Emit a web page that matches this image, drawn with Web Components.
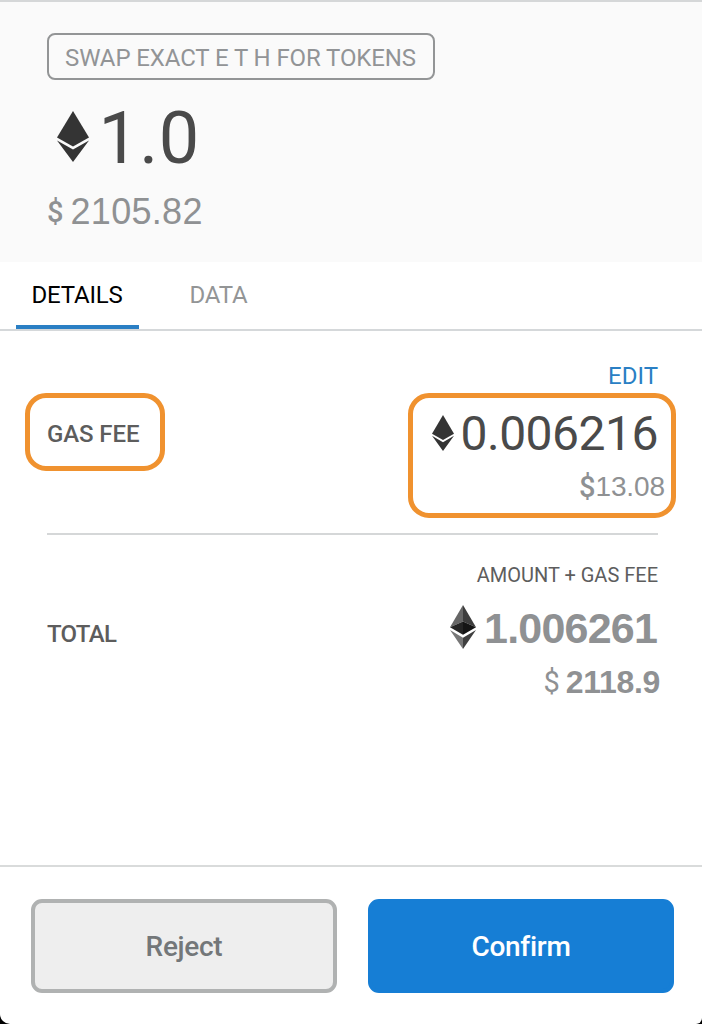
<!DOCTYPE html>
<html lang="en">
<head>
<meta charset="utf-8">
<title>Confirm transaction</title>
<style>
  html, body { margin: 0; height: 100%; background: #000; }
  body { font-family: Roboto, "Liberation Sans", sans-serif; color: #4a4a4a; overflow: hidden; }
</style>
</head>
<body>
<confirm-page>
  <tx-summary slot="summary" action="SWAP EXACT E T H FOR TOKENS">
    <eth-icon slot="icon"></eth-icon>
    <span slot="amount">1.0</span>
    <fiat-value slot="fiat" style="--digits: 36px; --gap: 7px; --track: 0.3px">2105.82</fiat-value>
  </tx-summary>

  <tab-bar slot="tabs">
    <tab-item active>DETAILS</tab-item>
    <tab-item>DATA</tab-item>
  </tab-bar>

  <fee-row slot="details" label="GAS FEE" highlighted>
    <span slot="note">EDIT</span>
    <eth-icon slot="icon"></eth-icon>
    <span slot="amount">0.006216</span>
    <fiat-value slot="fiat" style="--digits: 28px; --gap: 0px; --sign-weight: 500; --track: -0.1px">13.08</fiat-value>
  </fee-row>
  <fee-row slot="details" label="TOTAL" total>
    <span slot="note">AMOUNT + GAS FEE</span>
    <eth-icon slot="icon" faceted></eth-icon>
    <span slot="amount">1.006261</span>
    <fiat-value slot="fiat" style="--digits: 32px; --gap: 6px; --weight: 700; --sign-weight: 400; --track: -0.3px">2118.9</fiat-value>
  </fee-row>

  <action-button slot="actions" kind="secondary">Reject</action-button>
  <action-button slot="actions" kind="primary">Confirm</action-button>
</confirm-page>

<script>
function define(name, render) {
  customElements.define(name, class extends HTMLElement {
    constructor() {
      super();
      this.attachShadow({ mode: 'open' });
    }
    connectedCallback() {
      this.shadowRoot.innerHTML = render(this);
    }
  });
}

define('confirm-page', () => `
  <style>
    :host {
      display: flex;
      flex-direction: column;
      box-sizing: border-box;
      height: 1024px;
      background: #fff;
      border-top: 2px solid #d5d7d8;
      border-radius: 0 0 6px 10px;
      overflow: hidden;
    }
    main { flex: 1; padding: 0 44px 0 47px; }
    footer {
      display: grid;
      grid-template-columns: 1fr 1fr;
      gap: 31px;
      padding: 32px 28px 31px 31px;
      border-top: 2px solid #d9dbdb;
    }
  </style>
  <slot name="summary"></slot>
  <slot name="tabs"></slot>
  <main><slot name="details"></slot></main>
  <footer><slot name="actions"></slot></footer>
`);

define('eth-icon', el => el.hasAttribute('faceted') ? `
  <style>:host { display: block; } svg { display: block; width: 100%; height: 100%; }</style>
  <svg viewBox="0 0 26 44" preserveAspectRatio="none">
    <path fill="#666" d="M13 0 0 22.2 13 16.5z"/>
    <path fill="#3d3d3d" d="M13 0 26 22.2 13 16.5z"/>
    <path fill="#242424" d="M0 22.2 13 16.5V29.8z"/>
    <path fill="#151515" d="M26 22.2 13 16.5V29.8z"/>
    <path fill="#777" d="M0 25 13 32.8V44z"/>
    <path fill="#3f3f3f" d="M26 25 13 32.8V44z"/>
  </svg>
` : `
  <style>:host { display: block; } svg { display: block; width: 100%; height: 100%; }</style>
  <svg viewBox="0 0 32 51" preserveAspectRatio="none">
    <path fill="#343434" d="M16 0 32 26.5 16 35.5 0 26.5z"/>
    <path fill="#343434" d="M0 29.5 16 38.5 32 29.5 16 51z"/>
  </svg>
`);

define('fiat-value', () => `
  <style>
    :host {
      display: flex;
      align-items: center;
      gap: var(--gap);
      height: 40px;
      color: #8f9193;
      font: var(--weight, 400) var(--digits) / 40px "Liberation Sans", Arial, sans-serif;
      letter-spacing: var(--track, 0);
    }
    .sign { font: var(--sign-weight, 500) 29px/40px Roboto, sans-serif; letter-spacing: 0; }
  </style>
  <span class="sign">$</span><span><slot></slot></span>
`);

define('tx-summary', el => `
  <style>
    :host {
      display: block;
      box-sizing: border-box;
      height: 260px;
      padding: 31px 47px 0;
      background: #fafafa;
    }
    .action {
      display: flex;
      align-items: center;
      justify-content: center;
      box-sizing: border-box;
      width: 388px;
      height: 47px;
      padding: 2px 1px 0 0;
      border: 2px solid #939596;
      border-radius: 8px;
      color: #929496;
      font-size: 24px;
      letter-spacing: -0.1px;
      white-space: nowrap;
    }
    .amount {
      display: flex;
      align-items: center;
      height: 80px;
      margin: 19px 0 13px;
      padding-left: 9px;
      font-size: 72px;
      line-height: 80px;
      letter-spacing: 0.4px;
    }
    ::slotted(eth-icon) { width: 32px; height: 51px; margin: -5px 10px 0 0.5px; }
  </style>
  <div class="action">${el.getAttribute('action')}</div>
  <div class="amount"><slot name="icon"></slot><slot name="amount"></slot></div>
  <slot name="fiat"></slot>
`);

define('tab-bar', () => `
  <style>
    :host {
      display: flex;
      gap: 35px;
      box-sizing: border-box;
      height: 69px;
      padding: 0 16px;
      border-bottom: 2px solid #d5d8da;
    }
  </style>
  <slot></slot>
`);

define('tab-item', () => `
  <style>
    :host {
      display: block;
      box-sizing: border-box;
      padding: 0 16.5px 0 15.5px;
      color: #939596;
      font-size: 24px;
      line-height: 67px;
      letter-spacing: -0.2px;
    }
    :host([active]) {
      color: #000;
      box-shadow: inset 0 -4px #2a7fc4;
    }
  </style>
  <slot></slot>
`);

define('fee-row', el => `
  <style>
    :host {
      display: flex;
      justify-content: space-between;
      box-sizing: border-box;
      height: 204px;
      padding-top: 30px;
      border-bottom: 2px solid #d5d7d8;
    }
    :host([total]) { border: 0; padding-top: 25px; }
    .label {
      position: relative;
      align-self: flex-start;
      margin-top: 58px;
      font-size: 24px;
      font-weight: 500;
      line-height: 30px;
      letter-spacing: -0.1px;
      color: #5d5d5d;
    }
    :host([total]) .label { margin-top: 59px; letter-spacing: -0.7px; }
    .values { display: flex; flex-direction: column; align-items: flex-end; }
    .note { color: #2a7fc4; font-size: 24px; line-height: 30px; }
    :host([total]) .note { color: #5d5d5d; font-size: 20px; }
    .box { position: relative; display: flex; flex-direction: column; align-items: flex-end; }
    .amount {
      display: flex;
      align-items: center;
      height: 60px;
      margin-top: 13px;
      font-size: 48px;
      line-height: 60px;
      letter-spacing: -0.5px;
    }
    :host([total]) .amount {
      margin: 8px 1px 0 0;
      color: #8f9193;
      font: 700 43px/60px "Liberation Sans", Arial, sans-serif;
      letter-spacing: -0.8px;
    }
    ::slotted(eth-icon) { width: 22px; height: 36px; margin: -2px 7px 0 0; }
    :host([total]) ::slotted(eth-icon) { width: 26px; height: 44px; margin: -2px 8px 0 0; }
    .fiat { margin: 3px -7px 0 0; }
    :host([total]) .fiat { margin: 4px -2px 0 0; }
    /* orange callout drawn around the content */
    :host([highlighted]) .ring::after {
      content: "";
      position: absolute;
      inset: var(--ring);
      border: 5px solid #f0922f;
      border-radius: 21px;
    }
    .label { --ring: -26px -26px -22px -22px; }
    .box { --ring: 2px -18px -11px -24px; }
  </style>
  <div class="label ring">${el.getAttribute('label')}</div>
  <div class="values">
    <div class="note"><slot name="note"></slot></div>
    <div class="box ring">
      <div class="amount"><slot name="icon"></slot><slot name="amount"></slot></div>
      <div class="fiat"><slot name="fiat"></slot></div>
    </div>
  </div>
`);

define('action-button', () => `
  <style>
    :host { display: block; }
    button {
      display: block;
      box-sizing: border-box;
      width: 100%;
      height: 94px;
      padding: 1px 0 0;
      border: 4px solid #b0b2b2;
      border-radius: 11px;
      background: #eee;
      color: #737779;
      font: 500 28px/1 Roboto, sans-serif;
      letter-spacing: -0.3px;
    }
    :host([kind=primary]) button { border-color: #167ed5; background: #167ed5; color: #fff; }
  </style>
  <button><slot></slot></button>
`);
</script>
</body>
</html>
